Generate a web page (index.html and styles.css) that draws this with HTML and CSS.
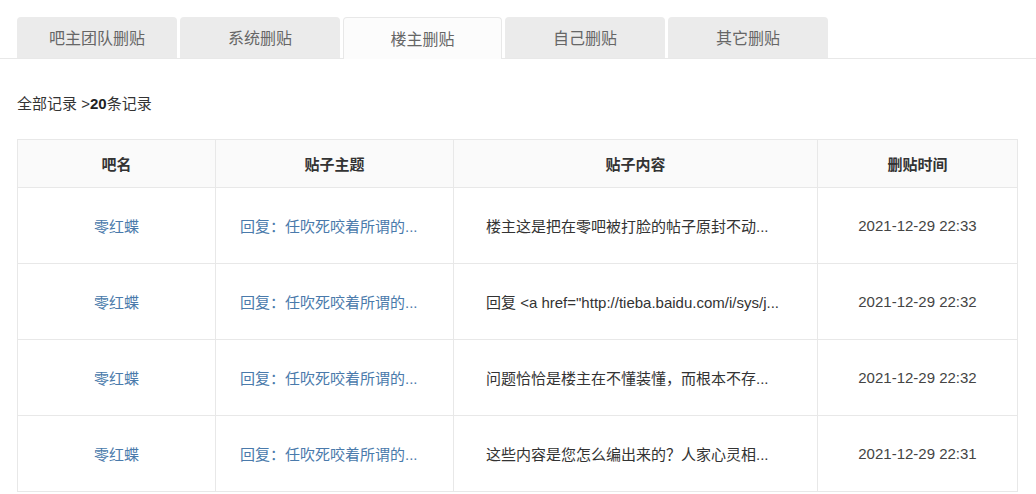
FILE: index.html
```html
<!DOCTYPE html>
<html lang="zh-CN">
<head>
<meta charset="utf-8">
<title>删贴记录</title>
<link rel="stylesheet" href="styles.css">
</head>
<body>
<div class="tabs">
  <div class="tab">吧主团队删贴</div>
  <div class="tab">系统删贴</div>
  <div class="tab active">楼主删贴</div>
  <div class="tab">自己删贴</div>
  <div class="tab">其它删贴</div>
</div>
<div class="crumb">全部记录 &gt;<b>20</b>条记录</div>
<table class="records">
  <colgroup>
    <col class="c1"><col class="c2"><col class="c3"><col class="c4">
  </colgroup>
  <thead>
    <tr><th>吧名</th><th>贴子主题</th><th>贴子内容</th><th>删贴时间</th></tr>
  </thead>
  <tbody>
    <tr>
      <td class="name"><a>零红蝶</a></td>
      <td class="topic"><a>回复：任吹死咬着所谓的...</a></td>
      <td class="content">楼主这是把在零吧被打脸的帖子原封不动...</td>
      <td class="time">2021-12-29 22:33</td>
    </tr>
    <tr>
      <td class="name"><a>零红蝶</a></td>
      <td class="topic"><a>回复：任吹死咬着所谓的...</a></td>
      <td class="content">回复 &lt;a href="http://tieba.baidu.com/i/sys/j...</td>
      <td class="time">2021-12-29 22:32</td>
    </tr>
    <tr>
      <td class="name"><a>零红蝶</a></td>
      <td class="topic"><a>回复：任吹死咬着所谓的...</a></td>
      <td class="content">问题恰恰是楼主在不懂装懂，而根本不存...</td>
      <td class="time">2021-12-29 22:32</td>
    </tr>
    <tr>
      <td class="name"><a>零红蝶</a></td>
      <td class="topic"><a>回复：任吹死咬着所谓的...</a></td>
      <td class="content">这些内容是您怎么编出来的？人家心灵相...</td>
      <td class="time">2021-12-29 22:31</td>
    </tr>
  </tbody>
</table>
</body>
</html>
```
FILE: styles.css
```css
html, body {
  margin: 0;
  padding: 0;
  background: #fff;
  font-family: "Liberation Sans", Arial, "Noto Sans CJK SC", sans-serif;
  color: #333;
}
.tabs {
  display: flex;
  gap: 3px;
  padding: 17px 0 0 17px;
  border-bottom: 1px solid #e8e8e8;
  height: 41px;
}
.tab {
  width: 160px;
  height: 41px;
  box-sizing: border-box;
  background: #ebebeb;
  border-radius: 4px 4px 0 0;
  color: #666;
  font-size: 16px;
  display: flex;
  align-items: center;
  justify-content: center;
  padding-bottom: 2px;
}
.tab.active {
  background: #fcfcfc;
  border: 1px solid #e8e8e8;
  border-bottom: none;
  height: 42px;
  width: 159px;
}
.crumb {
  margin: 35px 0 0 17px;
  font-size: 15px;
  color: #333;
  line-height: 20px;
}
.crumb b { color: #222; }
.records {
  margin: 25px 0 0 17px;
  border-collapse: collapse;
  table-layout: fixed;
  width: 1000px;
  font-size: 15px;
}
.c1 { width: 198px; }
.c2 { width: 238px; }
.c3 { width: 364px; }
.c4 { width: 200px; }
.records th, .records td {
  border: 1px solid #e8e8e8;
  white-space: nowrap;
  overflow: hidden;
}
.records th {
  height: 47px;
  padding: 0;
  background: #fafafa;
  font-weight: bold;
  color: #333;
  text-align: center;
}
.records td {
  height: 75px;
  padding: 0;
}
.records a {
  color: #4a7aab;
  text-decoration: none;
}
.name { text-align: center; }
.topic { padding-left: 24px !important; }
.content { padding-left: 32px !important; color: #333; }
.time { text-align: center; color: #444; }
```
